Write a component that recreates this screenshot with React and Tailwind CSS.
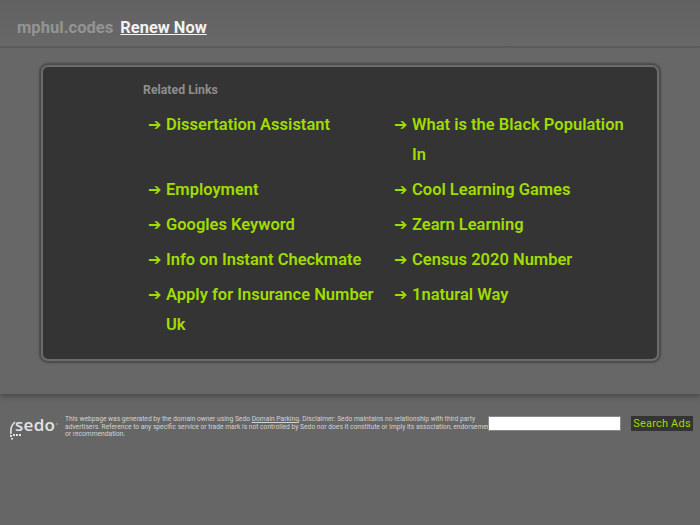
const links = [
  "Dissertation Assistant", "What is the Black Population In",
  "Employment", "Cool Learning Games",
  "Googles Keyword", "Zearn Learning",
  "Info on Instant Checkmate", "Census 2020 Number",
  "Apply for Insurance Number Uk", "1natural Way",
];

const LinkItem = ({ label }) => (
  <li className="flex py-[2.5px] pl-[5px] text-[16.5px] leading-[30px] font-semibold text-[#9fdc00]">
    <span className="w-[18px] shrink-0 font-['DejaVu_Sans'] font-bold text-[16px]">➔</span>
    <a href="#" className="block w-[218px]">{label}</a>
  </li>
);

const SedoLogo = () => (
  <div className="relative w-[52px] h-[24px] shrink-0 text-[#e4e4e4]">
    <span className="absolute left-[7px] -top-[3px] text-[17px] leading-[24px] font-semibold tracking-[0.3px] font-['Open_Sans']">sedo</span>
    <svg className="absolute left-0 top-0" width="52" height="26" viewBox="0 0 52 26" fill="none">
      <path d="M7 6 C3.5 9 2.2 13 3 18" stroke="#e4e4e4" strokeWidth="1.6" />
      <rect x="2" y="19" width="2" height="2" fill="#e4e4e4" />
      <rect x="5" y="18" width="2" height="2" fill="#e4e4e4" />
      <rect x="8" y="18" width="2" height="2" fill="#e4e4e4" />
      <rect x="11" y="18" width="2" height="2" fill="#e4e4e4" />
      <rect x="3" y="22" width="2" height="1.5" fill="#e4e4e4" />
      <circle cx="49" cy="8" r="1" stroke="#aaa" strokeWidth="0.5" />
    </svg>
  </div>
);

export default function App() {
  return (
    <div className="min-h-[525px] bg-[#666666] font-['Roboto',sans-serif] overflow-hidden">
      <div className="h-[394px] bg-[#676767] shadow-[0_2px_6px_rgba(0,0,0,0.35)]">
        <header className="h-[48px] flex items-end pb-[8px] pl-[17px] border-b-2 border-[#5c5c5c] bg-gradient-to-b from-[#626262] to-[#686868]">
          <span className="text-[16.6px] leading-[20px] font-bold text-[#949494]">mphul.codes</span>
          <a href="#" className="ml-[7px] text-[16.4px] leading-[20px] font-bold text-[#f2f2f2] underline">Renew Now</a>
        </header>

        <main className="mx-[41px] mt-[17px] h-[296px] rounded-[7px] bg-[#343434] border-2 border-[#6c6c6c] shadow-[0_0_2px_2px_rgba(60,60,60,0.7)] pl-[100px] pt-[15px]">
          <h2 className="text-[12.3px] leading-[16px] font-bold text-[#8e8e8e]">Related Links</h2>
          <ul className="mt-[9px] grid grid-cols-[246px_246px]">
            {links.map((l) => <LinkItem key={l} label={l} />)}
          </ul>
        </main>
      </div>

      <footer className="flex items-start pt-[22px] pl-[8px]">
        <SedoLogo />
        <div className="relative flex-1 flex">
          <p className="ml-[5px] w-[425px] shrink-0 text-[6.7px] leading-[7.5px] text-[#d2d2d2] whitespace-nowrap">
            This webpage was generated by the domain owner using Sedo <a href="#" className="underline">Domain Parking</a>. Disclaimer: Sedo maintains no relationship with third party<br />
            advertisers. Reference to any specific service or trade mark is not controlled by Sedo nor does it constitute or imply its association, endorsement<br />
            or recommendation.
          </p>
          <input className="absolute left-[428px] top-0 w-[133px] h-[15px] bg-white border border-[#888]" />
          <button className="absolute left-[571px] top-0 w-[62px] h-[15px] bg-[#343434] text-[#9fdc00] text-[11px] leading-[15px] tracking-[0.2px]">Search Ads</button>
        </div>
      </footer>
    </div>
  );
}
